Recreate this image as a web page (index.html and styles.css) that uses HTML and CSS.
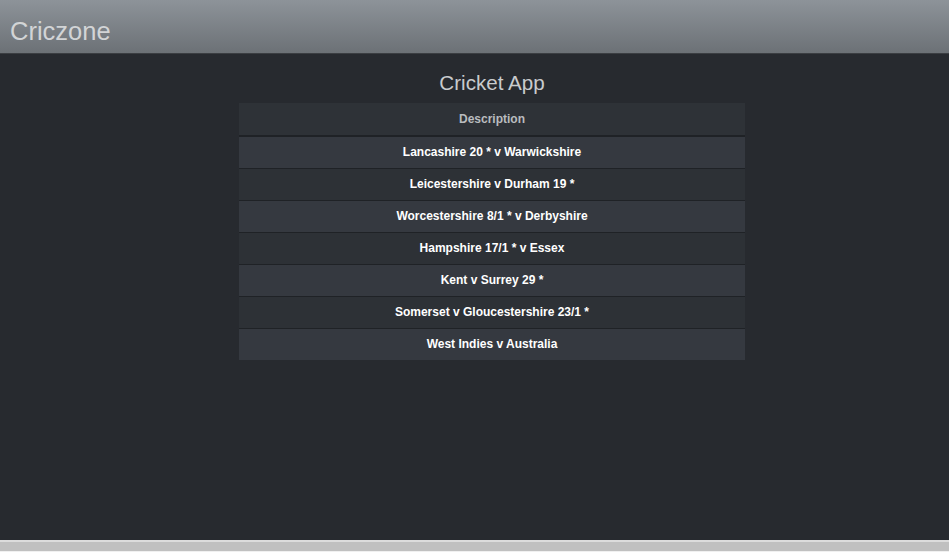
FILE: index.html
```html
<!DOCTYPE html>
<html>
<head>
<meta charset="utf-8">
<link rel="stylesheet" href="styles.css">
</head>
<body>
<div class="page">
  <header class="topbar"><span class="brand">Criczone</span></header>
  <main class="main">
    <h1 class="title">Cricket App</h1>
    <table class="matches">
      <thead><tr><th>Description</th></tr></thead>
      <tbody>
        <tr><td>Lancashire 20 * v Warwickshire</td></tr>
        <tr><td>Leicestershire v Durham 19 *</td></tr>
        <tr><td>Worcestershire 8/1 * v Derbyshire</td></tr>
        <tr><td>Hampshire 17/1 * v Essex</td></tr>
        <tr><td>Kent v Surrey 29 *</td></tr>
        <tr><td>Somerset v Gloucestershire 23/1 *</td></tr>
        <tr><td>West Indies v Australia</td></tr>
      </tbody>
    </table>
  </main>
  <div class="strip"></div>
</div>
</body>
</html>
```

FILE: styles.css
```css
html, body {
  margin: 0;
  padding: 0;
  height: 100%;
}
body {
  font-family: "Liberation Sans", Arial, sans-serif;
  background: #fff;
}
.page {
  display: flex;
  flex-direction: column;
  height: 552px;
}
.topbar {
  height: 53px;
  flex: 0 0 53px;
  background: linear-gradient(#8d9399, #6c7176);
  border-bottom: 1px solid #3b3e42;
  display: flex;
  align-items: center;
  padding-left: 10px;
  box-sizing: content-box;
}
.brand {
  color: #d2d4d6;
  font-size: 25.5px;
  padding-top: 10px;
}
.main {
  flex: 1;
  background: #272a2f;
  display: flex;
  flex-direction: column;
  align-items: center;
  padding-top: 17px;
  padding-left: 35px;
  border-bottom: 2px solid #dcdcdc;
}
.title {
  margin: 0 0 8px;
  font-size: 20.6px;
  font-weight: normal;
  color: #c9cbcd;
  line-height: 24px;
}
.matches {
  width: 506px;
  border-collapse: collapse;
  font-size: 12px;
  font-weight: bold;
  text-align: center;
}
.matches th {
  background: #2e3237;
  color: #b9bcbf;
  padding: 6px;
  line-height: 20px;
  border-bottom: 2px solid #1f2226;
}
.matches td {
  color: #ffffff;
  padding: 6px;
  line-height: 19px;
  border-top: 1px solid #1f2226;
}
.matches tbody tr:first-child td {
  border-top: none;
}
.matches tbody tr:nth-child(odd) td {
  background: #353940;
}
.matches tbody tr:nth-child(even) td {
  background: #2d3136;
}
.strip {
  flex: 0 0 9px;
  background: #c0c0c0;
  border-bottom: 1px solid #f0f0f0;
}
```
